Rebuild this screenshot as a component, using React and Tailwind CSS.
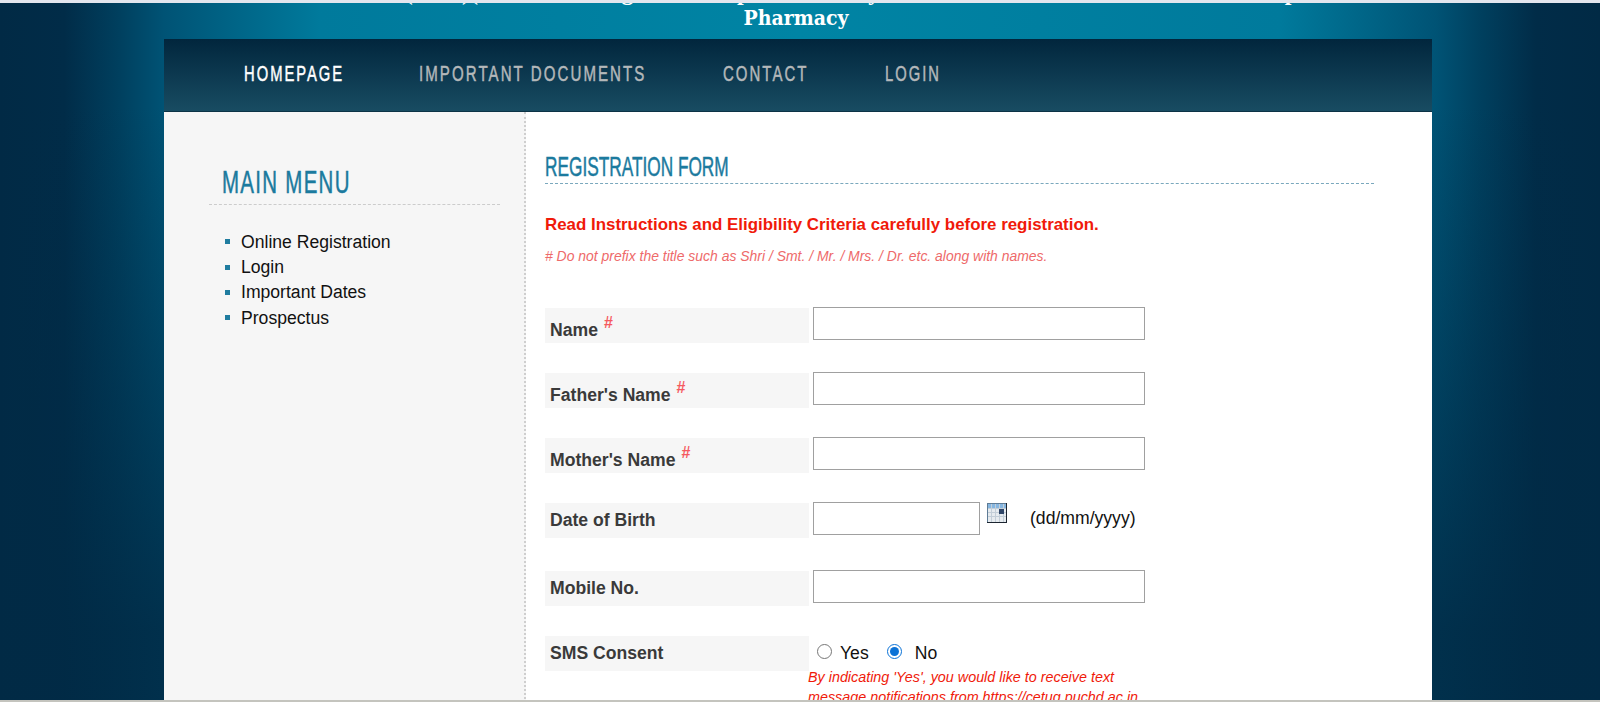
const navItems = [
  { label: "HOMEPAGE", width: "w-[98px]", scale: "scale-x-[0.67]", active: true },
  { label: "IMPORTANT DOCUMENTS", width: "w-[227px]", scale: "scale-x-[0.685]" },
  { label: "CONTACT", width: "w-[85px]", scale: "scale-x-[0.68]" },
  { label: "LOGIN", width: "w-[53px]", scale: "scale-x-[0.67]" },
];

const menuItems = ["Online Registration", "Login", "Important Dates", "Prospectus"];

// no Oswald here, so the condensed headings are squeezed Liberation Sans
const squeezed = "inline-block origin-left whitespace-nowrap [-webkit-text-stroke:0.5px_currentColor]";

function Label({ text, required }) {
  return (
    <div className={`w-[264px] h-[35px] bg-[#f6f6f6] pl-[5px] text-[17.6px] leading-[22px] font-bold text-[#3a3a3a] ${required ? "pt-[11px]" : "pt-[6px]"}`}>
      {text}
      {required && <sup className="ml-[6px] text-[16px] text-[#f55a5f] font-bold">#</sup>}
    </div>
  );
}

function TextRow({ text, required }) {
  return (
    <div className="flex h-[65px] gap-[4px]">
      <Label text={text} required={required} />
      <input className="w-[332px] h-[33px] -mt-[1px] border border-[#a0a0a0] bg-white" />
    </div>
  );
}

function CalendarIcon() {
  return (
    <svg width="20" height="20" viewBox="0 0 20 20" className="block">
      <rect width="20" height="20" fill="#5f7c96" />
      <rect x="1" y="1" width="18" height="18" fill="#e6ebef" />
      <rect x="1" y="1" width="18" height="4" fill="#86b6e0" />
      <path d="M4.5 1v18M8.5 1v18M12.5 1v18M16.5 1v18M1 5.5h18M1 9.5h18M1 13.5h18" stroke="#c3ced8" />
      <rect x="12" y="6" width="5" height="5" fill="#2f4668" />
      <path d="M19.5 0v20M0 19.5h20" stroke="#1c2530" />
    </svg>
  );
}

export default function App() {
  return (
    <div className="h-[702px] w-[1600px] overflow-hidden relative font-['Liberation_Sans',sans-serif] bg-[linear-gradient(to_right,#012a45_0%,#012c48_4%,#00405f_7.5%,#005375_10.25%,#007a9c_20%,#0084a4_50%,#007a9c_80%,#005375_89.75%,#00405f_92.5%,#012c48_96%,#012a45_100%)]">
      <div className="absolute inset-0 bg-[linear-gradient(to_bottom,rgba(1,42,69,0)_15%,rgba(1,42,69,0.85)_90%)]" />
      <div className="relative flex flex-col h-full w-[1268px] ml-[164px]">
        <div className="h-[60px] -mt-[21px] shrink-0 text-white font-bold text-[24px] leading-[26px] font-['Liberation_Serif',serif]">
          <div className="whitespace-nowrap -ml-[8px]">Common Entrance Test (CET)(For All Undergraduate Up to the Entry Test 2024 for All Courses of Bachelor up to Bachelor of</div>
          <div className="text-center pr-[4px] text-[21px] font-['DejaVu_Serif_Condensed','DejaVu_Serif',serif]">Pharmacy</div>
        </div>
        <nav className="flex h-[73px] shrink-0 items-center gap-[77px] pl-[80px] pb-[3px] border-b border-[#0c3346] bg-[linear-gradient(to_bottom,#01263d,#184c62)] text-[22px] tracking-[3px] text-[#b4b8ba]">
          {navItems.map((item) => (
            <div key={item.label} className={item.width}>
              <span className={`${squeezed} ${item.scale} ${item.active ? "text-white" : ""}`}>{item.label}</span>
            </div>
          ))}
        </nav>
        <div className="flex flex-1 bg-white">
          <aside className="w-[362px] shrink-0 bg-[#f6f6f6] border-r-2 border-dotted border-[#cfcfcf] pl-[45px] pt-[51px]">
            <h2 className="pl-[13px] pb-[3px] w-[291px] border-b border-dashed border-[#ccc] text-[32px] leading-[38px] tracking-[2px] text-[#1b7a9e]">
              <span className={`${squeezed} scale-x-[0.64]`}>MAIN MENU</span>
            </h2>
            <ul className="mt-[24px] ml-[16px]">
              {menuItems.map((item) => (
                <li key={item} className="flex items-center gap-[11px] h-[25.4px] text-[17.6px] text-[#111]">
                  <span className="w-[5px] h-[5px] bg-[#1f7c9f]" />
                  {item}
                </li>
              ))}
            </ul>
          </aside>
          <main className="flex-1 pl-[19px] pt-[39px]">
            <h1 className="w-[829px] h-[33px] border-b border-dashed border-[#7aa8bd] text-[28px] leading-[32px] text-[#1b7a9e]">
              <span className={`${squeezed} scale-x-[0.616]`}>REGISTRATION FORM</span>
            </h1>
            <p className="mt-[31px] text-[16.9px] leading-[20px] font-bold text-[#f01a0a]">
              Read Instructions and Eligibility Criteria carefully before registration.
            </p>
            <p className="mt-[12px] text-[13.95px] leading-[18px] italic text-[#ee6a6a]">
              # Do not prefix the title such as Shri / Smt. / Mr. / Mrs. / Dr. etc. along with names.
            </p>
            <div className="mt-[43px]">
              <TextRow text="Name" required />
              <TextRow text="Father's Name" required />
              <TextRow text="Mother's Name" required />
              <div className="flex h-[68px] gap-[4px]">
                <Label text="Date of Birth" />
                <input className="w-[167px] h-[33px] -mt-[1px] border border-[#a0a0a0] bg-white" />
                <div className="ml-[3px]">
                  <CalendarIcon />
                </div>
                <span className="ml-[19px] text-[17.6px] leading-[30px] text-[#111]">(dd/mm/yyyy)</span>
              </div>
              <TextRow text="Mobile No." />
              <div className="flex gap-[4px]">
                <Label text="SMS Consent" />
                <div className="text-[17.6px] text-[#111]">
                  <div className="flex items-center h-[31px] pl-[4px]">
                    <input type="radio" name="sms" className="m-0 -mt-[1px] w-[15px] h-[15px] accent-[#0b72d6]" />
                    <span className="ml-[8px] mt-[3px]">Yes</span>
                    <input type="radio" name="sms" defaultChecked className="m-0 -mt-[1px] ml-[18px] w-[15px] h-[15px] accent-[#0b72d6]" />
                    <span className="ml-[13px] mt-[3px]">No</span>
                  </div>
                  <p className="w-[335px] -ml-[5px] text-[14.35px] leading-[20px] italic text-[#f01a0a]">
                    By indicating 'Yes', you would like to receive text message notifications from https://cetug.puchd.ac.in
                  </p>
                </div>
              </div>
            </div>
          </main>
        </div>
      </div>
      <div className="absolute top-0 inset-x-0 h-[3px] bg-[#e3e6ee]" />
      <div className="absolute bottom-0 inset-x-0 h-[2px] bg-[#c4c4be]" />
    </div>
  );
}
